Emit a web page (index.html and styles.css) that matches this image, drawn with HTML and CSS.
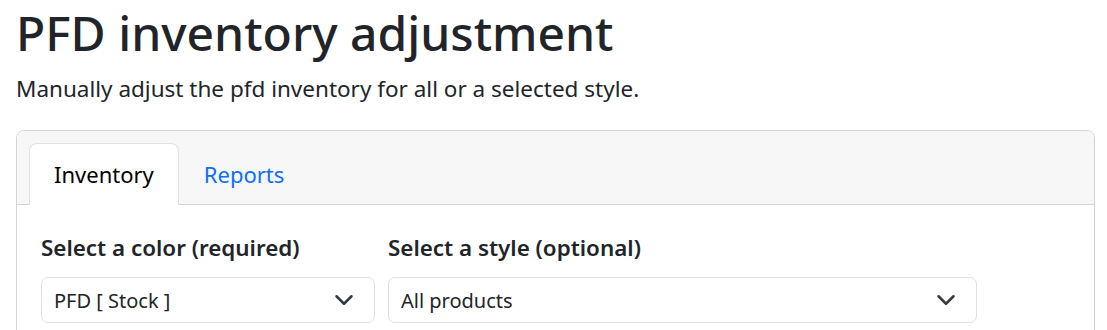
FILE: index.html
```html
<!DOCTYPE html>
<html lang="en">
<head>
  <meta charset="UTF-8">
  <title>PFD inventory adjustment</title>
  <link rel="stylesheet" href="styles.css">
</head>
<body>
  <div class="page">
    <h1 class="title">PFD inventory adjustment</h1>
    <p class="lead">Manually adjust the pfd inventory for all or a selected style.</p>

    <div class="card">
      <div class="card-header">
        <ul class="tabs">
          <li class="tab active">Inventory</li>
          <li class="tab">Reports</li>
        </ul>
      </div>
      <div class="card-body">
        <div class="row">
          <div class="field field-color">
            <label class="field-label">Select a color (required)</label>
            <div class="select">
              <span>PFD [ Stock ]</span>
              <svg class="chevron" viewBox="0 0 16 16"><path d="m2 5 6 6 6-6"/></svg>
            </div>
          </div>
          <div class="field field-style">
            <label class="field-label">Select a style (optional)</label>
            <div class="select">
              <span>All products</span>
              <svg class="chevron" viewBox="0 0 16 16"><path d="m2 5 6 6 6-6"/></svg>
            </div>
          </div>
        </div>
      </div>
    </div>
  </div>
</body>
</html>
```

FILE: styles.css
```css
body {
  margin: 0;
  font-family: 'Noto Sans', 'Open Sans', sans-serif;
  color: #212529;
  background: #fff;
}

.page {
  padding: 0 12px 0 16px;
}

.title {
  margin: 0;
  font-size: 48px;
  font-weight: 500;
  line-height: 65px;
}

.lead {
  margin: 7px 0 24px;
  font-size: 22.5px;
  font-weight: 400;
  line-height: 34px;
}

.card {
  border: 1px solid #d3d4d5;
  border-radius: 8px;
  overflow: hidden;
}

.card-header {
  background: #f7f7f7;
  border-bottom: 1px solid #d3d4d5;
  padding: 12px 12px 0;
}

.tabs {
  display: flex;
  list-style: none;
  margin: 0 0 -1px;
  padding: 0;
}

.tab {
  height: 60px;
  padding: 0 24px;
  display: flex;
  align-items: center;
  font-size: 22px;
  color: #0d6efd;
  border: 1px solid transparent;
  border-radius: 8px 8px 0 0;
}

.tab.active {
  color: #000;
  background: #fff;
  border-color: #dee2e6 #dee2e6 #fff;
}

.card-body {
  padding: 28px 24px 20px;
}

.row {
  display: flex;
  gap: 13px;
}

.field-color {
  width: 334px;
}

.field-style {
  width: 589px;
}

.field-label {
  display: block;
  font-size: 22.4px;
  font-weight: 600;
  line-height: 30px;
  margin-bottom: 14px;
}

.select {
  height: 44px;
  display: flex;
  align-items: center;
  justify-content: space-between;
  padding: 0 20px 0 12px;
  border: 1px solid #dee2e6;
  border-radius: 7px;
  font-size: 20px;
}

.chevron {
  width: 20px;
  height: 20px;
  fill: none;
  stroke: #343a40;
  stroke-width: 2;
  stroke-linecap: round;
  stroke-linejoin: round;
}
```
